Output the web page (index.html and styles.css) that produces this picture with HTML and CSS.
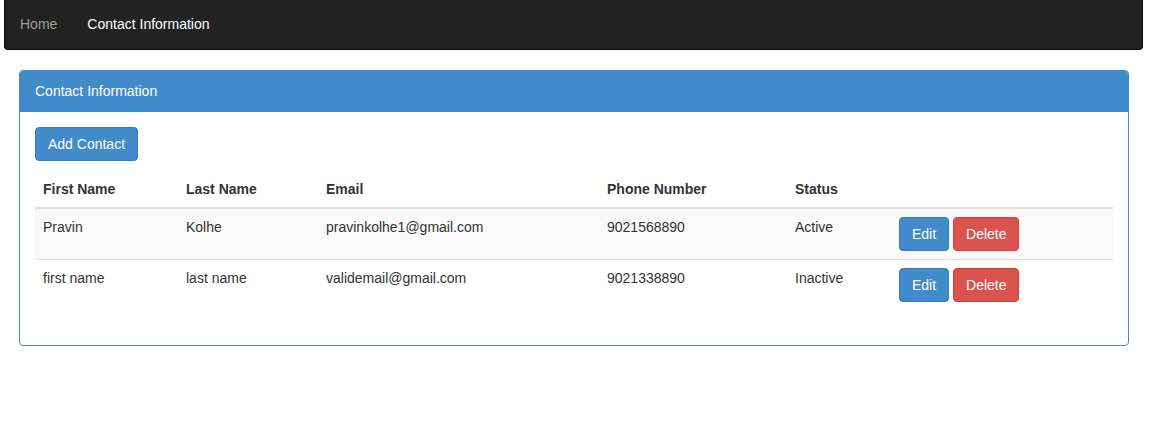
FILE: index.html
```html
<!DOCTYPE html>
<html>
<head>
<meta charset="utf-8">
<link rel="stylesheet" href="styles.css">
</head>
<body>
<div class="page">
  <nav class="navbar">
    <a class="nav-link" href="#">Home</a>
    <a class="nav-link active" href="#">Contact Information</a>
  </nav>
  <div class="container">
    <div class="panel">
      <div class="panel-heading">Contact Information</div>
      <div class="panel-body">
        <div class="toolbar"><button class="btn btn-primary">Add Contact</button></div>
        <table class="table">
          <colgroup>
            <col class="c1"><col class="c2"><col class="c3"><col class="c4"><col class="c5"><col class="c6">
          </colgroup>
          <thead>
            <tr><th>First Name</th><th>Last Name</th><th>Email</th><th>Phone Number</th><th>Status</th><th></th></tr>
          </thead>
          <tbody>
            <tr class="striped">
              <td>Pravin</td><td>Kolhe</td><td>pravinkolhe1@gmail.com</td><td>9021568890</td><td>Active</td>
              <td><button class="btn btn-primary">Edit</button> <button class="btn btn-danger">Delete</button></td>
            </tr>
            <tr>
              <td>first name</td><td>last name</td><td>validemail@gmail.com</td><td>9021338890</td><td>Inactive</td>
              <td><button class="btn btn-primary">Edit</button> <button class="btn btn-danger">Delete</button></td>
            </tr>
          </tbody>
        </table>
      </div>
    </div>
  </div>
</div>
</body>
</html>
```
FILE: styles.css
```css
html, body {
  margin: 0;
  padding: 0;
  background: #fff;
}
body {
  font-family: "Liberation Sans", Arial, sans-serif;
  font-size: 14px;
  line-height: 20px;
  color: #333;
}
.page {
  padding: 0 14px 0 4px;
}
.navbar {
  display: flex;
  height: 50px;
  box-sizing: border-box;
  background: #222;
  border: 1px solid #080808;
  border-top: none;
  border-radius: 0 0 4px 4px;
  margin-bottom: 20px;
}
.nav-link {
  display: block;
  padding: 14px 15px 15px;
  color: #9d9d9d;
  text-decoration: none;
}
.nav-link.active {
  color: #fff;
}
.container {
  padding: 0 14px 0 15px;
}
.panel {
  border: 1px solid #428bca;
  border-radius: 4px;
  background: #fff;
}
.panel-heading {
  background: #428bca;
  color: #fff;
  padding: 10px 15px;
  border-bottom: 1px solid #428bca;
  border-radius: 3px 3px 0 0;
}
.panel-body {
  padding: 15px;
}
.toolbar {
  margin-bottom: 10px;
}
.btn {
  display: inline-block;
  font-family: inherit;
  font-size: 14px;
  line-height: 20px;
  padding: 6px 12px;
  border: 1px solid transparent;
  border-radius: 4px;
  color: #fff;
  cursor: pointer;
  margin: 0;
  vertical-align: middle;
}
.btn-primary {
  background: #428bca;
  border-color: #357ebd;
}
.btn-danger {
  background: #d9534f;
  border-color: #d43f3a;
}
.table {
  width: 100%;
  border-collapse: collapse;
  border-spacing: 0;
  margin-bottom: 20px;
  table-layout: fixed;
}
.c1 { width: 143px; }
.c2 { width: 140px; }
.c3 { width: 281px; }
.c4 { width: 188px; }
.c5 { width: 104px; }
.table th, .table td {
  padding: 8px;
  text-align: left;
  vertical-align: top;
  line-height: 20px;
}
.table th {
  font-weight: bold;
  vertical-align: bottom;
  border-bottom: 2px solid #ddd;
}
.table td {
  border-top: 1px solid #ddd;
}
.table tbody tr:first-child td {
  border-top: none;
}
.striped {
  background: #f9f9f9;
}
```
